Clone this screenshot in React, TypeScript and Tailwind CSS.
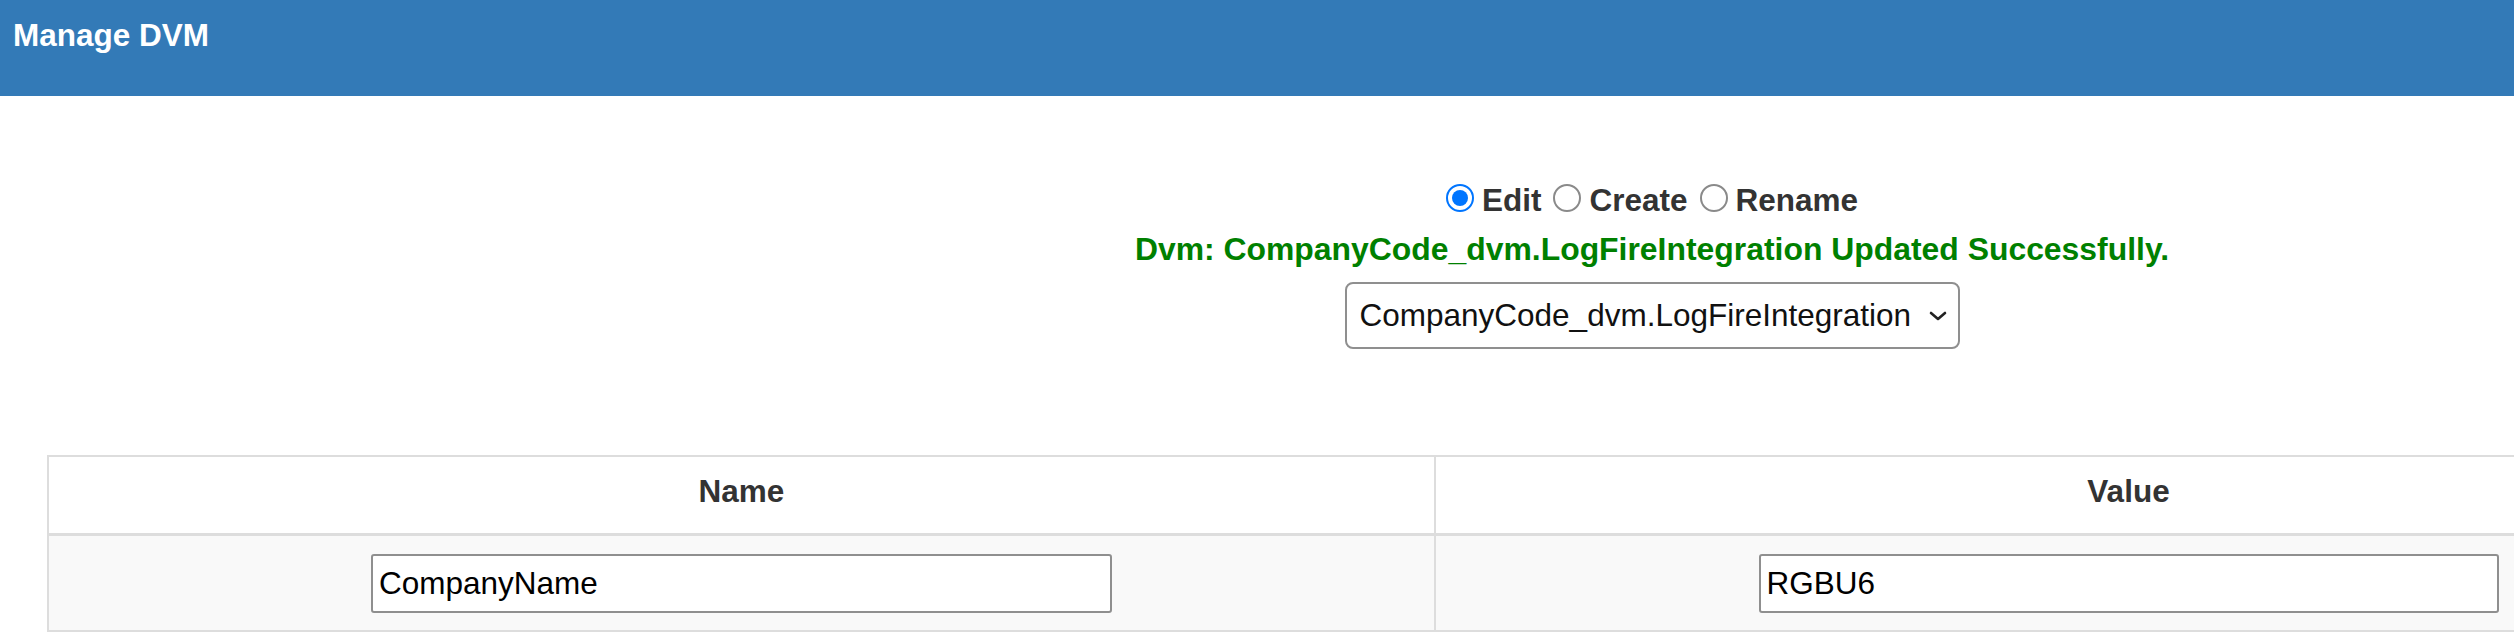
import React from "react";

function Radio({ checked, label }: { checked?: boolean; label: string }) {
	return (
		<label className="flex items-start gap-[8px]">
			{checked ? (
				<span className="flex w-[28px] h-[28px] -mt-[1px] items-center justify-center rounded-full border-2 border-[#0075ff] bg-white">
					<span className="block w-[16px] h-[16px] rounded-full bg-[#0075ff]" />
				</span>
			) : (
				<span className="block w-[28px] h-[28px] -mt-[1px] rounded-full border-2 border-[#8a8a8a] bg-white" />
			)}
			<span className="font-bold text-[#333]">{label}</span>
		</label>
	);
}

export default function App() {
	return (
		<div className="w-[2514px] h-[644px] overflow-hidden bg-white font-['Liberation_Sans',Arial,sans-serif] text-[31.5px] leading-none">
			<header className="h-[96px] bg-[#337ab7] pl-[13px] pt-[20px] text-white font-bold">
				Manage DVM
			</header>

			<section className="flex flex-col items-center pl-[790px] pt-[89px]">
				<div className="flex items-start gap-[12px]">
					<Radio checked label="Edit" />
					<Radio label="Create" />
					<Radio label="Rename" />
				</div>
				<p className="mt-[17px] text-[31.9px] font-bold text-[#008000]">
					Dvm: CompanyCode_dvm.LogFireIntegration Updated Successfully.
				</p>
				<div className="mt-[17px] flex w-[615px] h-[67px] items-center justify-between rounded-[8px] border-2 border-[#8f8f8f] bg-white pl-[13px] pr-[10px] text-[#111]">
					<span>CompanyCode_dvm.LogFireIntegration</span>
					<svg width="20" height="12" viewBox="0 0 20 12">
						<polyline
							points="3,3 10,9 17,3"
							fill="none"
							stroke="#222"
							strokeWidth="2.6"
							strokeLinecap="round"
							strokeLinejoin="round"
						/>
					</svg>
				</div>
			</section>

			<div className="pl-[47px] mt-[106px]">
				<table className="w-[2776px] table-fixed border-separate border-spacing-0 border-l-2 border-t-2 border-[#dddddd]">
					<thead>
						<tr>
							<th className="h-[79px] align-top pt-[19px] border-r-2 border-b-[3px] border-[#dddddd] bg-white font-bold text-[#333] text-center">
								Name
							</th>
							<th className="h-[79px] align-top pt-[19px] border-r-2 border-b-[3px] border-[#dddddd] bg-white font-bold text-[#333] text-center">
								Value
							</th>
						</tr>
					</thead>
					<tbody>
						<tr>
							<td className="h-[96px] align-middle border-r-2 border-b-2 border-[#dddddd] bg-[#f9f9f9] text-center">
								<input
									readOnly
									defaultValue="CompanyName"
									className="w-[741px] h-[59px] rounded-[3px] border-2 border-[#8f8f8f] bg-white px-[6px] text-black outline-none"
								/>
							</td>
							<td className="h-[96px] align-middle border-r-2 border-b-2 border-[#dddddd] bg-[#f9f9f9] text-center">
								<input
									readOnly
									defaultValue="RGBU6"
									className="w-[740px] h-[59px] rounded-[3px] border-2 border-[#8f8f8f] bg-white px-[6px] text-black outline-none"
								/>
							</td>
						</tr>
					</tbody>
				</table>
			</div>
		</div>
	);
}
